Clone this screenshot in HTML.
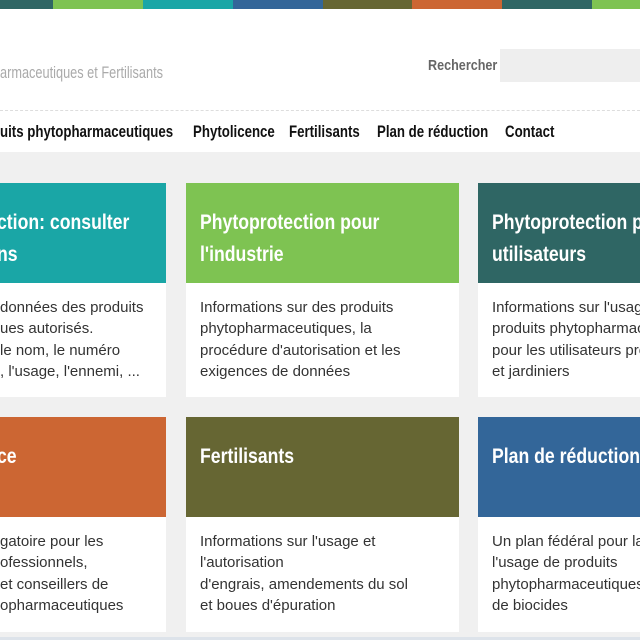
<!DOCTYPE html>
<html><head><meta charset="utf-8"><style>
*{margin:0;padding:0;box-sizing:border-box}
html,body{width:640px;height:640px;overflow:hidden}
body{position:relative;background:#f0f0f0;font-family:"Liberation Sans",sans-serif}
#w{position:absolute;left:0;top:0;width:640px;height:640px;overflow:hidden}
.a{position:absolute;white-space:nowrap}
.c{transform:scaleX(.84);transform-origin:0 0}
.n{transform:scaleX(.78);transform-origin:0 0;font-size:17px;font-weight:bold;color:#111;top:122px}
.hdr{position:absolute;left:0;top:0;width:640px;height:152px;background:#fff}
.bar{position:absolute;top:0;height:9px}
.card{position:absolute;background:#fff;overflow:hidden}
.card .h{position:absolute;left:0;top:0;right:0;height:100px}
.t{color:#fff;font-weight:bold;font-size:21px;left:14px}
.b{color:#333;font-size:15px;left:14px}
</style></head><body><div id="w">
<div class="hdr"></div>
<div class="bar" style="left:0;width:53px;background:#2f6664"></div>
<div class="bar" style="left:53px;width:90px;background:#7ec352"></div>
<div class="bar" style="left:143px;width:90px;background:#1aa6a6"></div>
<div class="bar" style="left:233px;width:90px;background:#336699"></div>
<div class="bar" style="left:323px;width:89px;background:#666633"></div>
<div class="bar" style="left:412px;width:90px;background:#cc6633"></div>
<div class="bar" style="left:502px;width:90px;background:#2f6664"></div>
<div class="bar" style="left:592px;width:48px;background:#7ec352"></div>
<div class="a" style="left:0;top:63px;font-size:17px;color:#aaa;transform:scaleX(.75);transform-origin:0 0">armaceutiques et Fertilisants</div>
<div class="a c" style="left:428px;top:57px;font-size:15px;font-weight:bold;color:#666">Rechercher</div>
<div class="a" style="left:500px;top:49px;width:140px;height:33px;background:#eee"></div>
<div class="a" style="left:0;top:110px;width:640px;border-top:1px dashed #ddd"></div>
<div class="a n" style="left:0">uits phytopharmaceutiques</div>
<div class="a n" style="left:193px">Phytolicence</div>
<div class="a n" style="left:289px">Fertilisants</div>
<div class="a n" style="left:377px">Plan de réduction</div>
<div class="a n" style="left:505px">Contact</div>

<div class="card" style="left:-110px;top:183px;width:276px;height:214px">
<div class="h" style="background:#1aa6a6"></div>
<div class="a t c" style="left:107px;top:28px">ction: consulter</div>
<div class="a t c" style="left:107px;top:60px">ns</div>
<div class="a b" style="left:110px;top:116px">données des produits</div>
<div class="a b" style="left:110px;top:137px">ues autorisés.</div>
<div class="a b" style="left:110px;top:159px">le nom, le numéro</div>
<div class="a b" style="left:110px;top:180px">, l'usage, l'ennemi, ...</div>
</div>
<div class="card" style="left:186px;top:183px;width:273px;height:214px">
<div class="h" style="background:#7ec352"></div>
<div class="a t c" style="top:28px">Phytoprotection pour</div>
<div class="a t c" style="top:60px">l'industrie</div>
<div class="a b" style="top:116px">Informations sur des produits</div>
<div class="a b" style="top:137px">phytopharmaceutiques, la</div>
<div class="a b" style="top:159px">procédure d'autorisation et les</div>
<div class="a b" style="top:180px">exigences de données</div>
</div>
<div class="card" style="left:478px;top:183px;width:200px;height:214px">
<div class="h" style="background:#2f6664"></div>
<div class="a t c" style="top:28px">Phytoprotection pour les</div>
<div class="a t c" style="top:60px">utilisateurs</div>
<div class="a b" style="top:116px">Informations sur l'usage des</div>
<div class="a b" style="top:137px">produits phytopharmaceutiques</div>
<div class="a b" style="top:159px">pour les utilisateurs pros</div>
<div class="a b" style="top:180px">et jardiniers</div>
</div>

<div class="card" style="left:-110px;top:417px;width:276px;height:215px">
<div class="h" style="background:#cc6633"></div>
<div class="a t c" style="left:107px;top:28px">ce</div>
<div class="a b" style="left:110px;top:116px">gatoire pour les</div>
<div class="a b" style="left:110px;top:137px">ofessionnels,</div>
<div class="a b" style="left:110px;top:159px">et conseillers de</div>
<div class="a b" style="left:110px;top:180px">opharmaceutiques</div>
</div>
<div class="card" style="left:186px;top:417px;width:273px;height:215px">
<div class="h" style="background:#666633"></div>
<div class="a t c" style="top:28px">Fertilisants</div>
<div class="a b" style="top:116px">Informations sur l'usage et</div>
<div class="a b" style="top:137px">l'autorisation</div>
<div class="a b" style="top:159px">d'engrais, amendements du sol</div>
<div class="a b" style="top:180px">et boues d'épuration</div>
</div>
<div class="card" style="left:478px;top:417px;width:162px;height:215px">
<div class="h" style="background:#336699"></div>
<div class="a t c" style="top:28px">Plan de réduction</div>
<div class="a b" style="top:116px">Un plan fédéral pour la</div>
<div class="a b" style="top:137px">l'usage de produits</div>
<div class="a b" style="top:159px">phytopharmaceutiques et</div>
<div class="a b" style="top:180px">de biocides</div>
</div>
<div class="a" style="left:0;top:637px;width:640px;height:3px;background:#dde3ea"></div>
</div></body></html>
